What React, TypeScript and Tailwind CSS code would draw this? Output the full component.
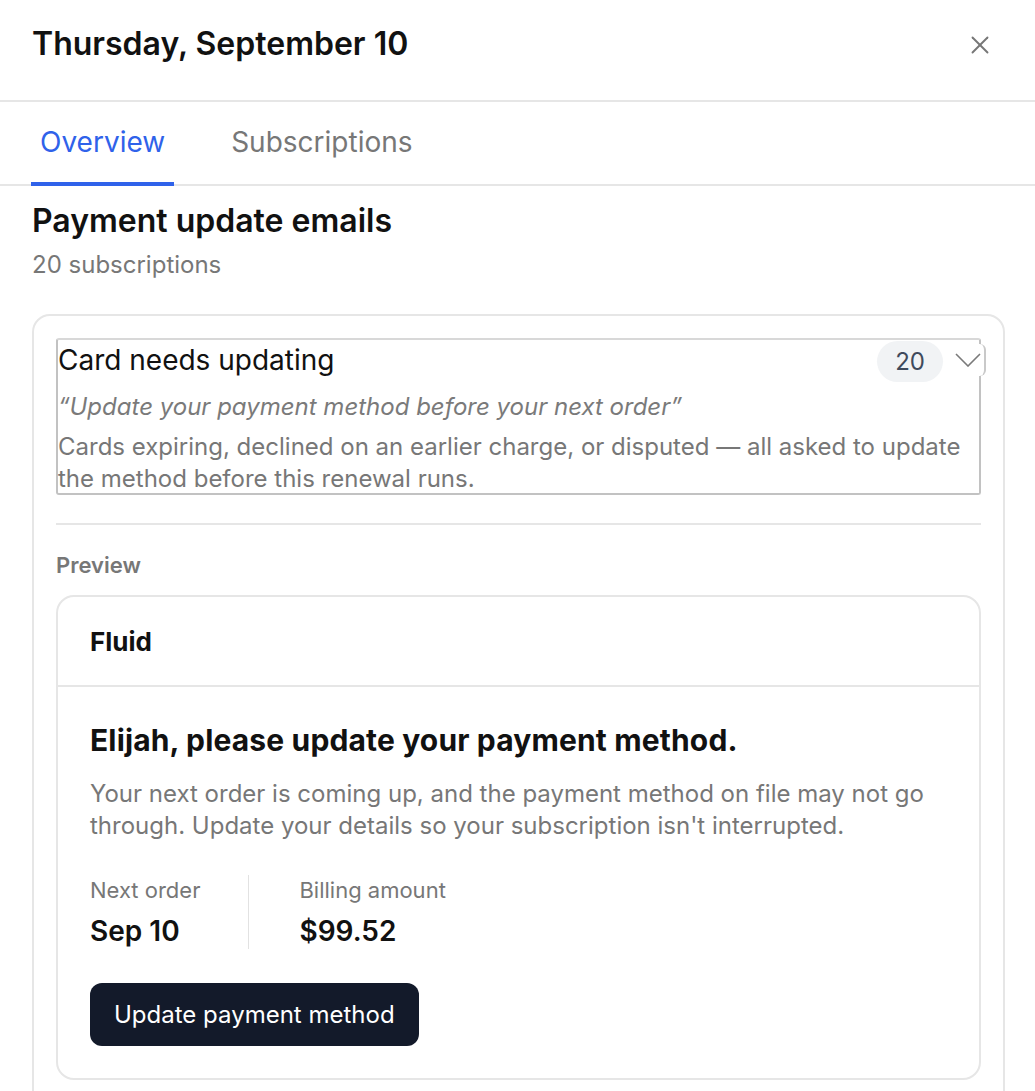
import React, { useState } from 'react';
import { X } from 'lucide-react';

// --- Tabs ---
const tabs = ['Overview', 'Subscriptions'];

const StatBlock: React.FC<{ label: string; value: string; divider?: boolean }> = ({ label, value, divider }) => (
  <div className={`flex flex-col ${divider ? 'pl-[50px] border-l border-[#e2e2e2]' : 'pr-[48px]'}`}>
    <span className="text-[22px] leading-[30px] text-[#777777]">{label}</span>
    <span className="mt-[8px] text-[28px] leading-[36px] font-semibold text-[#111111]">{value}</span>
  </div>
);

export default function App() {
  const [active, setActive] = useState('Overview');

  return (
    <div className="w-[1035px] h-[1091px] overflow-hidden bg-white font-['Inter',sans-serif] text-[#111111]">
      {/* Header */}
      <div className="flex items-center justify-between h-[102px] pl-8 pr-[42px] border-b-2 border-[#e6e6e6]">
        <h1 className="text-[32px] font-semibold -mt-[12px]">Thursday, September 10</h1>
        <button className="text-[#777777] -mt-[10px] mr-[-2px]">
          <X className="w-[30px] h-[30px]" strokeWidth={1.5} />
        </button>
      </div>

      {/* Tabs */}
      <div className="flex gap-[48px] pl-[31px] border-b-2 border-[#e6e6e6]">
        {tabs.map((t) => (
          <button
            key={t}
            onClick={() => setActive(t)}
            className={`relative px-[9px] pt-[20px] pb-[22px] text-[28px] leading-[40px] ${
              active === t ? 'text-[#2f62ea]' : 'text-[#777777]'
            }`}
          >
            {t}
            {active === t && <span className="absolute left-0 right-0 -bottom-[2px] h-[4px] bg-[#2f62ea]" />}
          </button>
        ))}
      </div>

      {/* Content */}
      <div className="pl-8 pr-[30px] pt-[15px]">
        <h2 className="text-[32px] leading-[40px] font-semibold">Payment update emails</h2>
        <p className="mt-[8px] text-[24px] leading-[32px] text-[#777777]">20 subscriptions</p>

        <div className="mt-[33px] border-2 border-[#e6e6e6] rounded-[18px] pt-[22px] px-[22px] pb-[40px]">
          {/* Segment button */}
          <div className="relative border-2 border-[#c2c2c2] border-t-[#d8d8d8] rounded-[3px]">
            <div className="flex items-start justify-between mt-[1px]">
              <span className="text-[28px] leading-[38px]">Card needs updating</span>
              <span className="mr-[36px] px-[18px] h-[41px] flex items-center rounded-full bg-[#f1f3f5] text-[24px] text-[#3f4a5c]">
                20
              </span>
            </div>
            {/* chevron sits over the right edge */}
            <span className="absolute -right-[7px] top-[4px] h-[32px] w-[34px] flex items-center justify-center bg-white border-r-2 border-[#c9c9c9] rounded-r-[6px]">
              <svg width="26" height="14" viewBox="0 0 26 14" fill="none" stroke="#7a7a7a" strokeWidth="1.6">
                <path d="M1 1 L13 13 L25 1" />
              </svg>
            </span>
            <p className="mt-[9px] text-[24px] leading-[32px] italic text-[#7a7a7a]">
              “Update your payment method before your next order”
            </p>
            <p className="mt-[8px] -mb-[2px] text-[24px] leading-[32px] text-[#777777]">
              Cards expiring, declined on an earlier charge, or disputed — all asked to update the method before this renewal runs.
            </p>
          </div>

          <div className="mt-[28px] border-t-2 border-[#e6e6e6]" />

          <p className="mt-[25px] text-[22px] leading-[30px] font-semibold text-[#777777]">Preview</p>

          {/* Email preview */}
          <div className="mt-[15px] border-2 border-[#e6e6e6] rounded-[18px]">
            <div className="px-[32px] h-[90px] flex items-center border-b-2 border-[#e6e6e6]">
              <span className="text-[26px] font-bold">Fluid</span>
            </div>
            <div className="px-[32px] pt-[31px] pb-[32px]">
              <h3 className="text-[30px] leading-[44px] font-bold tracking-[0.15px]">Elijah, please update your payment method.</h3>
              <p className="mt-[16px] text-[24px] leading-[32px] text-[#777777]">
                Your next order is coming up, and the payment method on file may not go through. Update your details so your subscription isn't interrupted.
              </p>
              <div className="mt-[33px] flex">
                <StatBlock label="Next order" value="Sep 10" />
                <StatBlock label="Billing amount" value="$99.52" divider />
              </div>
              <button className="mt-[34px] h-[63px] px-[24px] rounded-[12px] bg-[#131a2a] text-white text-[24px]">
                Update payment method
              </button>
            </div>
          </div>
        </div>
      </div>
    </div>
  );
}
